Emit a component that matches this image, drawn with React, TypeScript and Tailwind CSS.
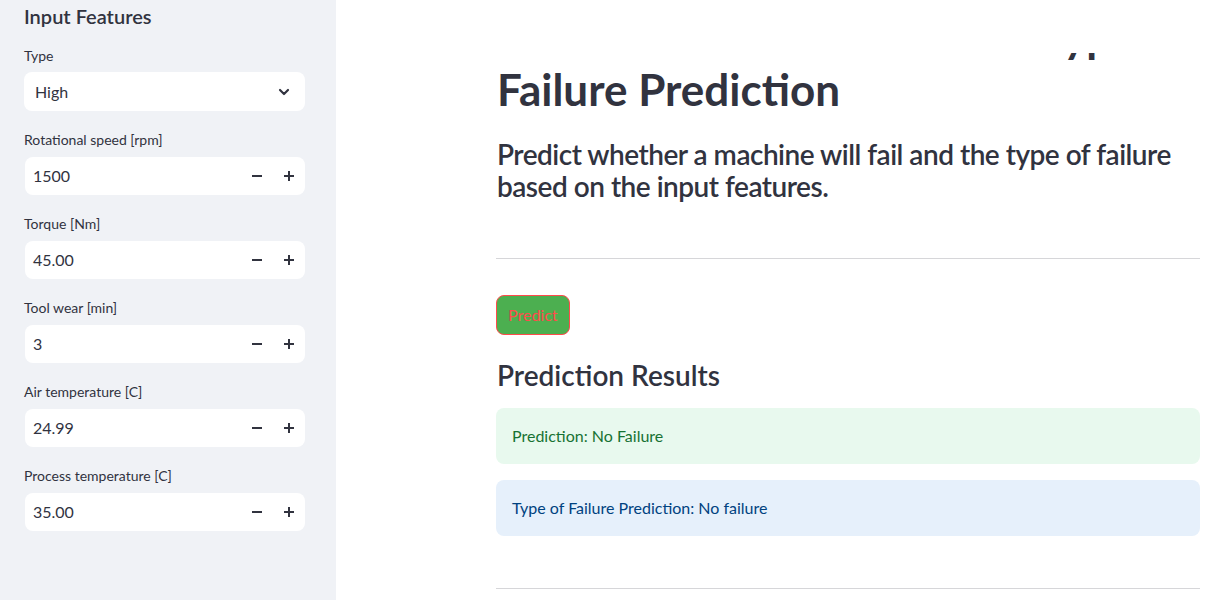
import React from "react";

const font = { fontFamily: "Lato, 'Noto Sans', sans-serif" };

function NumberField({ label, value }: { label: string; value: string }) {
  return (
    <div className="flex flex-col">
      <label className="text-[14px] leading-[20px] text-[#31333f] mb-[7px]">{label}</label>
      <div className="flex items-center h-[38px] ml-px w-[280px] bg-white rounded-lg pl-[8px]">
        <span className="flex-1 text-[16px] text-[#31333f]">{value}</span>
        <button className="w-[32px] h-full flex items-center justify-center">
          <svg width="10" height="10" viewBox="0 0 10 10">
            <rect x="0" y="4" width="10" height="2" fill="#31333f" />
          </svg>
        </button>
        <button className="w-[32px] h-full flex items-center justify-center">
          <svg width="10" height="10" viewBox="0 0 10 10">
            <rect x="0" y="4" width="10" height="2" fill="#31333f" />
            <rect x="4" y="0" width="2" height="10" fill="#31333f" />
          </svg>
        </button>
      </div>
    </div>
  );
}

export default function App() {
  const fields = [
    { label: "Rotational speed [rpm]", value: "1500" },
    { label: "Torque [Nm]", value: "45.00" },
    { label: "Tool wear [min]", value: "3" },
    { label: "Air temperature [C]", value: "24.99" },
    { label: "Process temperature [C]", value: "35.00" },
  ];

  return (
    <div className="flex w-[1205px] h-[600px] overflow-hidden bg-white text-[#31333f]" style={font}>
      {/* sidebar */}
      <aside className="w-[336px] shrink-0 bg-[#f0f2f6] px-[24px] pt-[4px]">
        <h2 className="text-[20px] leading-[24px] font-semibold mb-[18px]">Input Features</h2>
        <div className="flex flex-col gap-[19px]">
          <div className="flex flex-col">
            <label className="text-[14px] leading-[20px] mb-[6px]">Type</label>
            <div className="flex items-center justify-between h-[39px] w-[281px] bg-white rounded-lg pl-[11px] pr-[13px]">
              <span className="text-[16px]">High</span>
              <svg width="16" height="16" viewBox="0 0 24 24" fill="none" stroke="#31333f" strokeWidth="3.2" strokeLinecap="round" strokeLinejoin="round">
                <path d="M6 9l6 6 6-6" />
              </svg>
            </div>
          </div>
          {fields.map((f) => (
            <NumberField key={f.label} label={f.label} value={f.value} />
          ))}
        </div>
      </aside>

      {/* main */}
      <main className="relative flex-1">
        <div className="absolute top-0 left-0 right-0 h-[53px] bg-white z-10" />
        <div className="ml-[160px] w-[704px] pt-[10px]">
          <h1 className="text-[44px] leading-[53px] font-bold pl-px">
            Machine Failure and Failure Type
            <br />
            Failure Prediction
          </h1>
          <h3 className="mt-[22px] pl-px text-[28px] leading-[32px] font-semibold tracking-[-0.5px]">
            Predict whether a machine will fail and the type of failure based on the input features.
          </h3>
          <hr className="mt-[56px] border-t border-[#d6d6d9]" />
          <button className="mt-[36px] h-[40px] px-[11px] rounded-lg bg-[#4caf50] border border-[#ff4b4b] text-[#ff4b4b] text-[16px]">
            Predict
          </button>
          <h3 className="mt-[20px] pl-px text-[28px] leading-[40px] font-semibold">Prediction Results</h3>
          <div className="mt-[13px] h-[56px] rounded-lg bg-[#e8f9ee] text-[#177233] text-[16px] flex items-center px-[16px]">
            Prediction: No Failure
          </div>
          <div className="mt-[16px] h-[56px] rounded-lg bg-[#e6f0fb] text-[#004280] text-[16px] flex items-center px-[16px]">
            Type of Failure Prediction: No failure
          </div>
          <hr className="mt-[52px] border-t border-[#d6d6d9]" />
        </div>
      </main>
    </div>
  );
}
